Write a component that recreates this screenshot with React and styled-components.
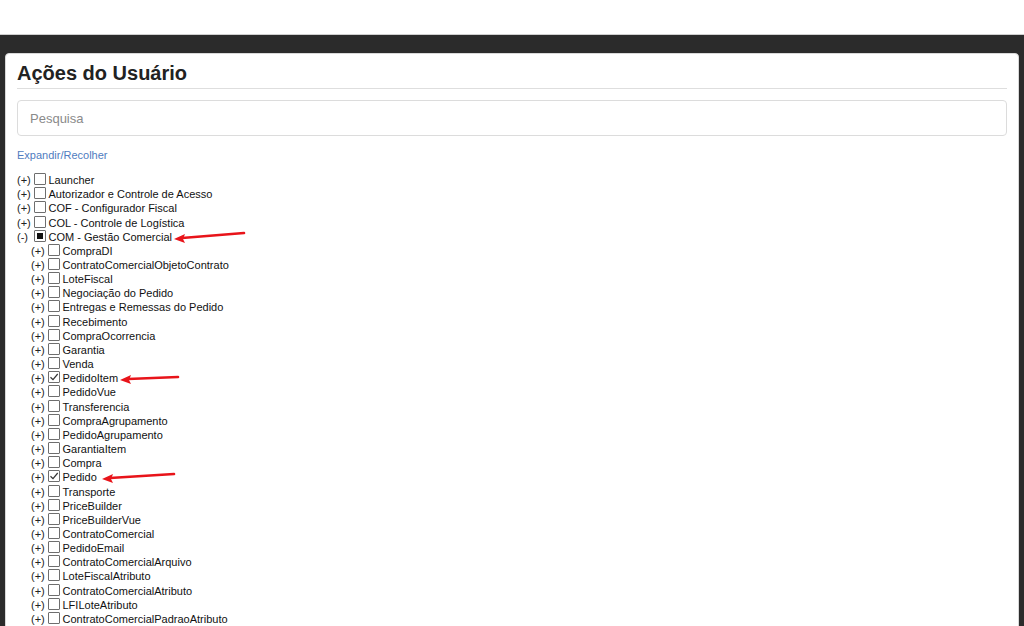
import React from "react";
import styled, { createGlobalStyle } from "styled-components";

const GlobalStyle = createGlobalStyle`
  html, body {
    margin: 0;
    padding: 0;
    background: #fff;
    font-family: "Liberation Sans", Arial, sans-serif;
    overflow: hidden;
  }
`;

const modules = [
  { label: "Launcher" },
  { label: "Autorizador e Controle de Acesso" },
  { label: "COF - Configurador Fiscal" },
  { label: "COL - Controle de Logística" },
  {
    label: "COM - Gestão Comercial",
    open: true,
    state: "partial",
    arrow: { left: 157, len: 70, rise: 5 },
    children: [
      { label: "CompraDI" },
      { label: "ContratoComercialObjetoContrato" },
      { label: "LoteFiscal" },
      { label: "Negociação do Pedido" },
      { label: "Entregas e Remessas do Pedido" },
      { label: "Recebimento" },
      { label: "CompraOcorrencia" },
      { label: "Garantia" },
      { label: "Venda" },
      { label: "PedidoItem", state: "checked", arrow: { left: 103, len: 58, rise: 2 } },
      { label: "PedidoVue" },
      { label: "Transferencia" },
      { label: "CompraAgrupamento" },
      { label: "PedidoAgrupamento" },
      { label: "GarantiaItem" },
      { label: "Compra" },
      { label: "Pedido", state: "checked", arrow: { left: 85, len: 72, rise: 4 } },
      { label: "Transporte" },
      { label: "PriceBuilder" },
      { label: "PriceBuilderVue" },
      { label: "ContratoComercial" },
      { label: "PedidoEmail" },
      { label: "ContratoComercialArquivo" },
      { label: "LoteFiscalAtributo" },
      { label: "ContratoComercialAtributo" },
      { label: "LFILoteAtributo" },
      { label: "ContratoComercialPadraoAtributo" },
    ],
  },
];

const TopBar = styled.div`
  height: 34px;
  background: #fff;
  border-bottom: 1px solid #cfcfcf;
`;

const Backdrop = styled.div`
  background: #2b2b2b;
  padding: 18px 5px 0;
  height: 591px;
  box-sizing: border-box;
  overflow: hidden;
`;

const Panel = styled.div`
  background: #fff;
  border: 1px solid #d8d8d8;
  border-radius: 4px 4px 0 0;
  padding: 0 11px;
  height: 620px;
  box-sizing: border-box;
  overflow: hidden;
`;

const Title = styled.h2`
  margin: 0;
  padding: 7px 0 3px;
  font-size: 20px;
  line-height: 24px;
  font-weight: bold;
  color: #222;
  border-bottom: 1px solid #dedede;
`;

const Search = styled.div`
  margin-top: 11px;
  height: 36px;
  border: 1px solid #dcdcdc;
  border-radius: 4px;
  box-sizing: border-box;
  display: flex;
  align-items: center;
  padding-left: 12px;
  font-size: 13px;
  color: #8a8a8a;
`;

const Toggle = styled.a`
  display: block;
  margin-top: 12px;
  font-size: 11px;
  line-height: 14px;
  color: #4f7cc0;
  text-decoration: none;
`;

const Tree = styled.ul`
  list-style: none;
  margin: 11px 0 0;
  padding: 0;
  position: relative;
`;

const Row = styled.li`
  display: flex;
  align-items: center;
  height: 14.16px;
  padding-left: ${(p) => p.$level * 14}px;
  font-size: 11px;
  color: #111;
  white-space: nowrap;
  position: relative;
`;

const Expander = styled.span`
  width: 16.5px;
  color: #222;
`;

const Box = styled.span`
  width: 10px;
  height: 10px;
  border: 1px solid #6e6e6e;
  border-radius: 1px;
  background: #fff;
  margin-right: 3px;
  margin-top: -2px;
  display: flex;
  align-items: center;
  justify-content: center;
  flex-shrink: 0;
`;

const Square = styled.span`
  width: 6px;
  height: 6px;
  background: #111;
`;

const Arrow = styled.svg`
  position: absolute;
  top: 0px;
  left: ${(p) => p.$left}px;
  overflow: visible;
`;

function CheckBox({ state }) {
  return (
    <Box>
      {state === "partial" && <Square />}
      {state === "checked" && (
        <svg width="10" height="10" viewBox="0 0 10 10">
          <path d="M1.5 5.2 L4 7.6 L8.7 2" fill="none" stroke="#333" strokeWidth="1.2" />
        </svg>
      )}
    </Box>
  );
}

function RedArrow({ left, len, rise }) {
  return (
    <Arrow $left={left} width={len} height="14">
      <path d={`M8 8 L${len} ${8 - rise}`} stroke="#e8141a" strokeWidth="2.6" strokeLinecap="round" />
      <path d="M0 9 L11 4 L9 9 L11 13 Z" fill="#e8141a" />
    </Arrow>
  );
}

function Node({ node, level }) {
  return (
    <>
      <Row $level={level}>
        <Expander>{node.open ? "(-)" : "(+)"}</Expander>
        <CheckBox state={node.state} />
        <span>{node.label}</span>
        {node.arrow && <RedArrow {...node.arrow} />}
      </Row>
      {node.open &&
        node.children.map((c) => <Node key={c.label} node={c} level={level + 1} />)}
    </>
  );
}

export default function App() {
  return (
    <>
      <GlobalStyle />
      <TopBar />
      <Backdrop>
        <Panel>
          <Title>Ações do Usuário</Title>
          <Search>Pesquisa</Search>
          <Toggle href="#">Expandir/Recolher</Toggle>
          <Tree>
            {modules.map((m) => (
              <Node key={m.label} node={m} level={0} />
            ))}
          </Tree>
        </Panel>
      </Backdrop>
    </>
  );
}
